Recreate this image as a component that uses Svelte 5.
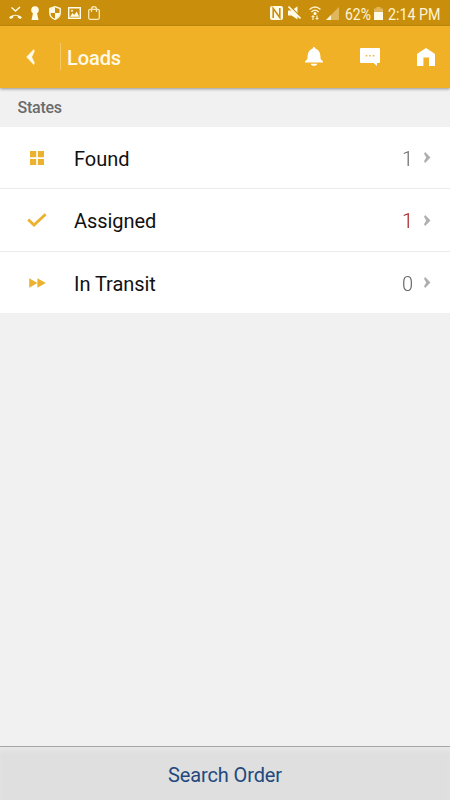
<script>
  const states = [
    { name: 'Found', count: 1, icon: 'grid' },
    { name: 'Assigned', count: 1, icon: 'check', alert: true },
    { name: 'In Transit', count: 0, icon: 'forward' }
  ];
</script>

<div class="screen">
  <div class="status">
    <svg class="missed" width="15" height="14" viewBox="0 0 15 14"><path d="M3.5 1.5 7.5 5 12 1" fill="none" stroke="#fffbe6" stroke-width="1.5"/><path d="M1 11.5C4.5 7.8 10.5 7.8 14 11.5L12.2 13 9.7 11.4V10C8.5 9.6 6.5 9.6 5.3 10V11.4L2.8 13Z" fill="#fffbe6"/></svg>
    <svg class="keyhole" width="8" height="14" viewBox="0 0 8 14"><circle cx="4" cy="4" r="3.8" fill="#fffbe6"/><path d="M2.2 6H5.8L7.5 14H.5Z" fill="#fffbe6"/></svg>
    <svg class="shield" width="12" height="14" viewBox="0 0 12 14"><path d="M6 .7 11.2 2.5V6.7C11.2 9.8 9 12.3 6 13.3 3 12.3.8 9.8.8 6.7V2.5Z" fill="none" stroke="#fffbe6" stroke-width="1.4"/><path d="M6 1V7H1V3ZM6 7H11C10.5 10 8.5 12 6 13Z" fill="#fffbe6"/></svg>
    <svg class="photo" width="13" height="12" viewBox="0 0 13 12"><path fill-rule="evenodd" d="M0 0H13V12H0ZM1.4 1.4V10.6H11.6V1.4Z" fill="#fffbe6"/><path d="M2 9.8 4.5 6 6.2 8 8.7 4.5 11.3 9.8Z" fill="#fffbe6"/><circle cx="4" cy="3.7" r="1" fill="#fffbe6"/></svg>
    <svg class="bag" width="12" height="14" viewBox="0 0 12 14"><rect x=".7" y="3.3" width="10.6" height="10" rx="1.5" fill="none" stroke="#fbe9b4" stroke-width="1.3"/><path d="M3.5 6V3.5A2.5 2.8 0 0 1 8.5 3.5V6" fill="none" stroke="#fbe9b4" stroke-width="1.3"/></svg>
    <span class="grow"></span>
    <svg class="nfc" width="13" height="14" viewBox="0 0 13 14"><rect width="13" height="14" rx="2" fill="#fffbe6"/><path d="M3.2 12V2.5L9.8 11.5V2" fill="none" stroke="#c98e0b" stroke-width="1.6"/></svg>
    <svg class="mute" width="13" height="14" viewBox="0 0 13 14"><path d="M0 4.5H3.5L9.5.3V13.5L3.5 9.5H0Z" fill="#fffbe6"/><path d="M1.8 0 13 11.2" stroke="#c98e0b" stroke-width="1.3"/><path d="M.5 .5 12.5 12.5" stroke="#fffbe6" stroke-width="1.6"/></svg>
    <svg class="wifi" width="12" height="15" viewBox="0 0 12 15"><path d="M.5 3.5Q6-1.5 11.5 3.5M2.4 6Q6 2.6 9.6 6" fill="none" stroke="#fff0c8" stroke-width="1.4"/><circle cx="6" cy="7.6" r="1.5" fill="#fffbe6"/><path d="M2 11 4 9 6 11H4.6V14H3.4V11ZM6 12 8 14 10 12H8.6V9.5H7.4V12Z" fill="#fff0c8"/></svg>
    <svg class="signal" width="13" height="13" viewBox="0 0 13 13"><path d="M0 13 13 0V13Z" fill="#e1b75d"/><path d="M0 13 5 8V13Z" fill="#fff4d3"/></svg>
    <span class="pct">62%</span>
    <svg class="battery" width="9" height="13" viewBox="0 0 9 13"><path d="M2.5 0H6.5V1.5H9V5H0V1.5H2.5Z" fill="#e2b75c"/><path d="M0 5H9V13H0Z" fill="#fffbe6"/></svg>
    <span class="time">2:14 PM</span>
  </div>

  <header>
    <svg class="back" width="9" height="16" viewBox="0 0 9 16"><path d="M7.9 0 .3 8 7.9 16 8.7 13.7 6 8 8.7 2.3Z" fill="#fff9e5"/></svg>
    <span class="divider"></span>
    <h1>Loads</h1>
    <span class="grow"></span>
    <svg class="bell" width="18" height="20" viewBox="0 0 18 20"><path d="M9 0C9.8 0 10.3.6 10.2 1.5C13.3 2.3 15.1 5 15.3 8.2L15.6 12L18 14.4V15.6H0V14.4L2.4 12L2.7 8.2C2.9 5 4.7 2.3 7.8 1.5C7.7.6 8.2 0 9 0ZM5.8 16.7H12.2C12 19.4 6 19.4 5.8 16.7Z" fill="#fff"/></svg>
    <svg class="chat" width="20" height="18" viewBox="0 0 20 18"><path d="M1 0H19Q20 0 20 1V14Q20 15 19 15H17V18L13.5 15H1Q0 15 0 14V1Q0 0 1 0Z" fill="#fff"/><path d="M5.7 6.9H7.3V8.4H5.7ZM9.2 6.9H10.8V8.4H9.2ZM12.7 6.9H14.3V8.4H12.7Z" fill="#edb443"/></svg>
    <svg class="home" width="18" height="18" viewBox="0 0 18 18"><path d="M9 0 17.4 5.4Q18 5.8 18 6.6V18H12V9.6H6.4V18H0V6.6Q0 5.8.6 5.4Z" fill="#fff"/></svg>
  </header>

  <h2>States</h2>

  <ul>
    {#each states as s}
      <li>
        <span class="icon">
          {#if s.icon === 'grid'}
            <svg width="14" height="14" viewBox="0 0 14 14"><path d="M0 0H6.2V6.2H0ZM7.9 0H14V6.2H7.9ZM0 7.9H6.2V14H0ZM7.9 7.9H14V14H7.9Z" fill="#ebb12f"/></svg>
          {:else if s.icon === 'check'}
            <svg width="20" height="14" viewBox="0 0 20 14"><path d="M1.2 6.5 7 12 18.6 1.2" fill="none" stroke="#ebb12f" stroke-width="2.8"/></svg>
          {:else}
            <svg width="17" height="10" viewBox="0 0 17 10"><path d="M.2.2 8.4 5 .2 9.8ZM8.4.2 16.8 5 8.4 9.8Z" fill="#ebb12f"/></svg>
          {/if}
        </span>
        <span class="name">{s.name}</span>
        <span class="count" class:alert={s.alert}>{s.count}</span>
        <svg class="chevron" width="7" height="11" viewBox="0 0 7 11"><path d="M1.2 0 6.5 5.5 1.2 11 0 9.2 2.2 5.5 0 1.8Z" fill="#b0b0b0"/></svg>
      </li>
    {/each}
  </ul>

  <button>Search Order</button>
</div>

<style>
  :global(body) { margin: 0; }
  .screen {
    width: 450px; height: 800px; overflow: hidden;
    display: flex; flex-direction: column;
    background: #f1f1f1; font-family: Roboto, "Liberation Sans", sans-serif;
  }
  svg { display: block; flex: none; }
  .grow { flex: 1; }
  .status {
    flex: none; height: 26px; box-sizing: border-box; padding: 0 11px 0 8px;
    display: flex; align-items: center; background: #c98e0b;
    color: #fff5d6; font-size: 16px; white-space: nowrap;
  }
  .keyhole { margin-left: 8px; }
  .shield { margin-left: 10px; }
  .photo { margin-left: 7px; }
  .bag { margin-left: 7px; }
  .mute { margin-left: 5px; }
  .wifi { margin-left: 8px; }
  .signal { margin-left: 5px; }
  .pct, .time { padding-top: 2px; font-size: 16px; transform-origin: left center; }
  .pct { margin-left: 6px; width: 25px; transform: scaleX(.87); }
  .battery { margin-left: 4px; }
  .time { margin-left: 5px; width: 51px; transform: scaleX(.89); }
  header {
    flex: none; height: 62px; box-sizing: border-box; padding: 0 15px 1px 26px;
    display: flex; align-items: center; position: relative;
    background: #f1b127; box-shadow: 0 1px 3px rgba(0, 0, 0, .4);
  }
  .divider { width: 1px; height: 27px; margin-left: 25px; background: #f6c965; }
  h1 { margin: 3px 0 0 6px; font-size: 20px; line-height: 24px; font-weight: 500; color: #fffae8; letter-spacing: -.1px; }
  .bell { margin-right: 37px; }
  .chat { margin-right: 37px; }
  h2 {
    flex: none; height: 38.6px; box-sizing: border-box; margin: 0; padding: 1px 0 0 17.5px;
    font-size: 16px; line-height: 37px; font-weight: 500; color: #6b6b6b; letter-spacing: -.25px;
  }
  ul { flex: none; margin: 0; padding: 0; list-style: none; background: #fff; }
  li {
    height: 62.5px; box-sizing: border-box; padding: 1px 19px 0 0;
    display: flex; align-items: center; border-bottom: 1px solid #ebebeb;
  }
  li:last-child { border-bottom-color: #f1f1f1; }
  .icon { width: 74px; display: flex; justify-content: center; }
  .name { flex: 1; font-size: 20px; line-height: 24px; color: #111; padding-top: 2px; letter-spacing: -.05px; }
  .count { font-size: 20px; line-height: 24px; font-weight: 300; color: #666; padding-top: 2px; will-change: transform; }
  .count.alert { color: #a0161c; }
  .chevron { margin-left: 11px; }
  button {
    margin: auto 0 0; height: 54px; box-sizing: border-box; flex: none; padding: 3px 0 0;
    border: 0; border-top: 1px solid #a5a5a5; background: #dfdfdf;
    box-shadow: inset 0 5px 5px -2px #e9e9e9;
    font: 400 20px/24px Roboto, "Liberation Sans", sans-serif; color: #22497d; letter-spacing: -.12px;
  }
</style>
